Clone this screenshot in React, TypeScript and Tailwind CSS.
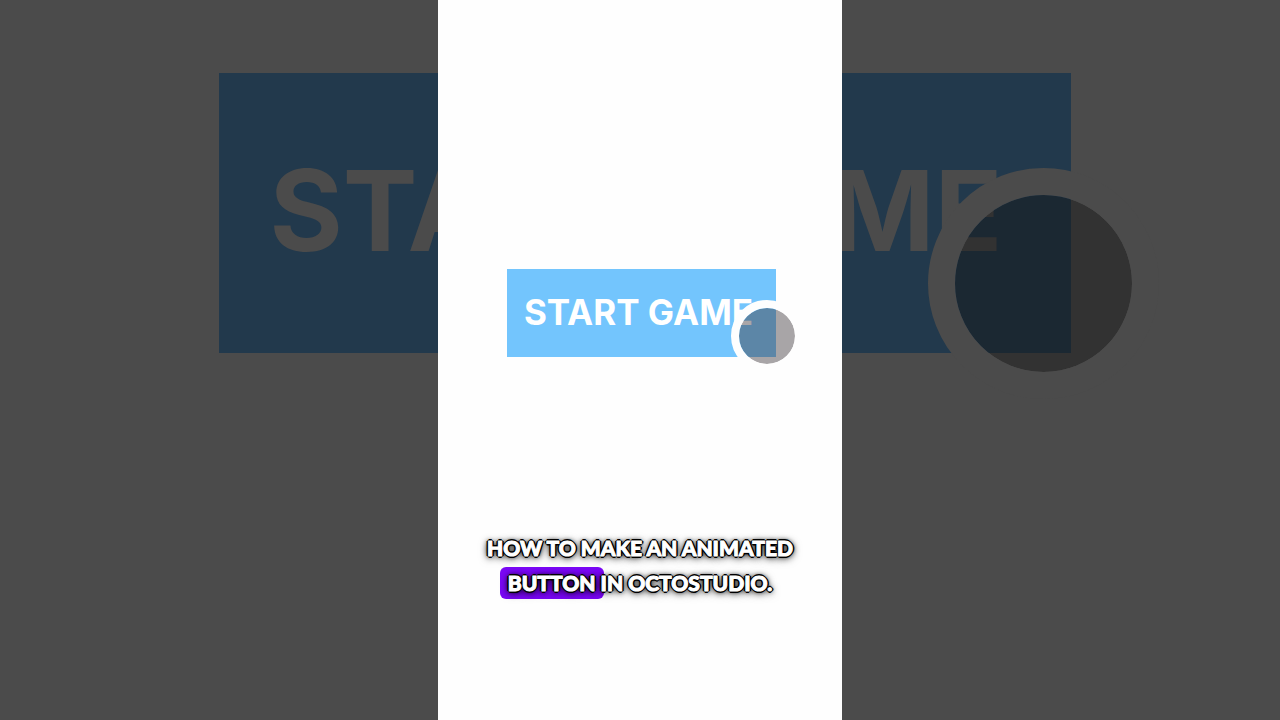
function Backdrop() {
  return (
    <div
      aria-hidden="true"
      className="col-start-1 row-start-1 flex justify-center overflow-hidden pt-[73px] pl-[10px]"
    >
      <div className="relative flex h-[280px] w-[852px] shrink-0 items-center justify-center bg-[#22394c] pr-[18px] pb-[6px]">
        <span className="text-[112px] leading-none font-bold whitespace-nowrap text-[#4b4b4b]">
          START GAME
        </span>
        <span className="absolute top-[95px] left-[709px] size-[231px] rounded-full border-[27px] border-[#4b4b4b] bg-[rgba(20,20,20,0.45)] bg-clip-padding" />
      </div>
    </div>
  );
}

function StartButton() {
  return (
    <button
      type="button"
      className="relative flex h-[88px] w-[269px] items-center justify-center bg-[#73c5fd] pr-[6px] pb-[2px] text-[35px] leading-none font-bold whitespace-nowrap text-white"
    >
      START GAME
      <span
        aria-hidden="true"
        className="absolute top-[31px] left-[224px] size-[72px] rounded-full border-8 border-[#fefefe] bg-[rgba(64,58,62,0.45)] bg-clip-padding"
      />
    </button>
  );
}

function Caption() {
  return (
    <p className="text-center font-[Lato,sans-serif] text-[21px] leading-[35px] font-black whitespace-nowrap text-white [-webkit-text-stroke:1px_white] [text-shadow:1px_1px_0_#000,-1px_-1px_0_#000,1px_-1px_0_#000,-1px_1px_0_#000,2px_0_0_#000,-2px_0_0_#000,0_2px_0_#000,0_-2px_0_#000,0_0_4px_#000,0_1px_7px_#000,0_2px_10px_rgba(0,0,0,0.5)]">
      HOW TO MAKE AN ANIMATED
      <br />
      <span className="-mx-2 rounded-md bg-[#7a08f5] px-2 pt-[3px] pb-1">
        BUTTON
      </span>{" "}
      IN OCTOSTUDIO.
    </p>
  );
}

export default function App() {
  return (
    <main className="grid min-h-screen grid-cols-1 bg-[#4b4b4b] font-[Inter,sans-serif]">
      <Backdrop />
      <section className="relative col-start-1 row-start-1 flex w-[404px] flex-col items-center justify-self-center bg-[#fefefe] pt-[269px]">
        <div className="pl-[3px]">
          <StartButton />
        </div>
        <div className="mt-[173px]">
          <Caption />
        </div>
      </section>
    </main>
  );
}
